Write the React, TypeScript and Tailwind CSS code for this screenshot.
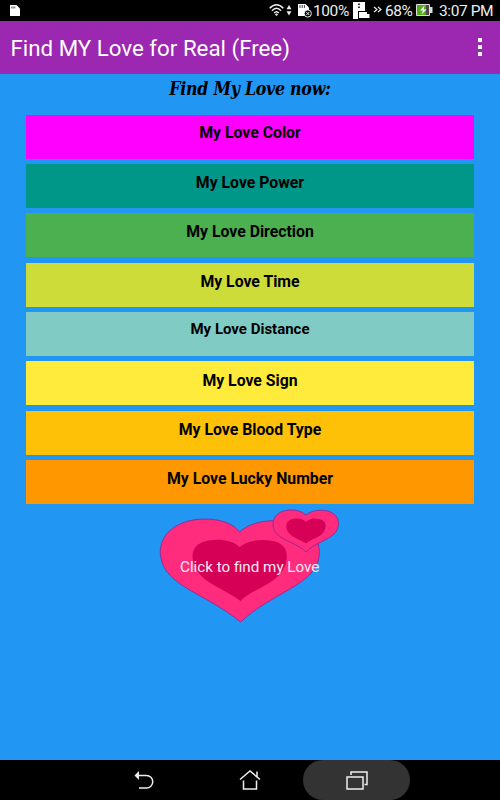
const buttons = [
  { label: "My Love Color", style: "bg-[#ff00ff] pb-[7px] text-[15.8px]" },
  { label: "My Love Power", style: "bg-[#009688] pb-[6px] text-[15.8px]" },
  { label: "My Love Direction", style: "bg-[#4caf50] pb-[6px] text-[15.8px]" },
  { label: "My Love Time", style: "bg-[#cddc39] pb-[6px] text-[15.8px]" },
  { label: "My Love Distance", style: "bg-[#80cbc4] pb-[9px] text-[15px]" },
  { label: "My Love Sign", style: "bg-[#ffeb3b] pb-[6px] text-[15.8px]" },
  { label: "My Love Blood Type", style: "bg-[#ffc107] pb-[6px] text-[15.8px]" },
  { label: "My Love Lucky Number", style: "bg-[#ff9800] pb-[6px] text-[15.8px]" },
];

const StatusBar = () => {
  return (
    <div className="flex h-[20.5px] items-center bg-black pl-[10px] leading-none text-[#eeeeee]">
      <svg width="10" height="11" viewBox="0 0 10 11">
        <path d="M0 0h6.5L10 3.5V11H0z" fill="#fff" />
        <path d="M1 2.5h4.5" stroke="#999" strokeWidth="2" />
      </svg>
      <svg className="ml-auto" width="23" height="14" viewBox="0 0 23 14">
        <g fill="none" stroke="#eee" strokeWidth="1.5">
          <path d="M0.7 5.2Q7.5 -1.8 14.3 5.2" />
          <path d="M3 7.7Q7.5 2.9 12 7.7" />
          <path d="M5.2 10.1Q7.5 7.5 9.8 10.1" />
        </g>
        <path d="M5.8 11.3Q7.5 9.9 9.2 11.3L7.5 13z" fill="#eee" />
        <path d="M17.5 6.2l2.5-4.2 2.5 4.2zM17.5 8.3h5L20 12.5z" fill="#eee" />
      </svg>
      <svg className="ml-[6px]" width="14" height="15" viewBox="0 0 14 15">
        <path d="M0 1h7.5L11 4.5V13H0z" fill="#fff" />
        <path d="M2 2v3M4.2 2v3M6.4 2v3" stroke="#444" />
        <circle cx="9.8" cy="10.5" r="3.6" fill="#000" stroke="#eee" />
        <path d="M8.3 9l3 3M11.3 9l-3 3" stroke="#eee" />
      </svg>
      <span className="ml-[1px] mt-[2px] w-[37px] text-[15.5px] tracking-[-0.4px]">
        100%
      </span>
      <svg className="ml-[3px]" width="17" height="18" viewBox="0 0 17 18">
        <path d="M0 1h12v9H5v8H0z" fill="#fff" />
        <path d="M6 2.5v1.5M6 5.5v1.5" stroke="#222" strokeWidth="1.8" />
        <path d="M6 11h8v2h2.5v4H6z" fill="#fff" />
      </svg>
      <svg className="ml-[3px]" width="9" height="8" viewBox="0 0 9 8">
        <path
          d="M1 1l3 2.5L1 6M5 1l3 2.5L5 6"
          fill="none"
          stroke="#eee"
          strokeWidth="1.2"
        />
      </svg>
      <span className="ml-[3px] mt-[2px] w-[28px] text-[15.5px] tracking-[-0.5px]">
        68%
      </span>
      <svg className="ml-[3px]" width="17" height="12" viewBox="0 0 17 12">
        <path d="M0.5 0.5h13v11h-13z" fill="#4a4a4a" stroke="#ddd" />
        <path d="M1 1h9v10H1z" fill="#4fae15" />
        <path d="M14 3h2.5v6H14z" fill="#ddd" />
        <path d="M8.5 1.5L4 6.5h3l-1.5 4 5-5h-3z" fill="#fff" />
      </svg>
      <span className="ml-[6px] mt-[2px] w-[61px] whitespace-nowrap text-[15.5px] tracking-[-0.4px]">
        3:07 PM
      </span>
    </div>
  );
};

const AppBar = () => {
  return (
    <div className="flex h-[53px] items-center justify-between bg-[#9c27b0] pl-[10.5px] pr-[18px] text-white">
      <h1 className="mt-[2px] text-[22.3px] leading-none">
        Find MY Love for Real (Free)
      </h1>
      <div className="space-y-[3px]">
        <div className="size-[4px] bg-white" />
        <div className="size-[4px] bg-white" />
        <div className="size-[4px] bg-white" />
      </div>
    </div>
  );
};

const LoveButton = () => {
  return (
    <button className="relative mx-auto mt-[3.4px] block h-[116px] w-[182px]">
      <svg width="182" height="116" viewBox="159 508 182 116">
        <g stroke="#8d2291" strokeWidth="0.8">
          <path
            d="M239.5 532C229 518 202 516.5 185 522C165 529 159 543 160.5 556C164 586 207 594 240.5 622C273 592 315 585 319 557C322 539 308 521.5 280 520.5C260 520 247 525 239.5 532Z"
            fill="#ff2c7d"
          />
          <path
            d="M306 515C299 509 289 509 282 511.5C271 516 271 528 277 534C284 541 298 544 306 552C315 542 332 540 337 530C341 521 337 514 328 511C319 509 311 511 306 515Z"
            fill="#ff2c7d"
          />
        </g>
        <g fill="#d60056">
          <path d="M239.5 547C232 539.5 215 538 203 542C192 546 191 556 194 564C200 583 224 588 240.5 601C255 587 280 584 286 563C289 551 284 543 273 541C258 538.5 247 541 239.5 547Z" />
          <path d="M306 522C302 518 295 517.5 290 520C284 523 286 531 290 534C295 539 301 540 306 543.5C311 539 319 538 323 533C328 526 326 520.5 319 519C313 517.5 309 519 306 522Z" />
        </g>
      </svg>
      <span className="absolute left-[21px] top-[50px] whitespace-nowrap text-[15.2px] leading-[18px] text-[#fbe9f4]">
        Click to find my Love
      </span>
    </button>
  );
};

const NavBar = () => {
  return (
    <div className="flex h-[40px] items-center bg-black pl-[90px]">
      <div className="flex w-[107px] justify-center">
        <svg width="20" height="20" viewBox="0 0 20 20" fill="none">
          <path
            d="M4 5.5h8.5a6.25 6.25 0 0 1 0 12.5H5"
            stroke="#eee"
            strokeWidth="1.5"
          />
          <path d="M0.5 5.5L5 1v9z" fill="#eee" />
        </svg>
      </div>
      <div className="flex w-[106px] justify-center">
        <svg width="22" height="22" viewBox="0 0 22 22" fill="none">
          <path
            d="M1 10.5L11 2l10 8.5M18 8V2.5M4.5 11.5V20h13v-8.5"
            stroke="#eee"
            strokeWidth="1.5"
          />
        </svg>
      </div>
      <div className="flex h-[40px] w-[107px] items-center justify-center rounded-full bg-[#333333]">
        <svg width="22" height="19" viewBox="0 0 22 19" fill="none">
          <path
            d="M1 6h16v12H1zM5 4V1h16v12.5h-2.5"
            stroke="#eee"
            strokeWidth="1.5"
          />
        </svg>
      </div>
    </div>
  );
};

const App = () => {
  return (
    <div className="flex h-[800px] w-[500px] flex-col overflow-hidden bg-[#2196f3] font-['Roboto',sans-serif]">
      <StatusBar />
      <AppBar />
      <main className="flex-1">
        <h2 className="h-[41px] pt-[3px] text-center font-['DejaVu_Serif_Condensed','DejaVu_Serif',serif] text-[17.6px] font-bold italic leading-[24px] tracking-[-0.25px]">
          Find My Love now:
        </h2>
        <div className="flex flex-col gap-[5.4px] px-[26px]">
          {buttons.map((button) => (
            <button
              key={button.label}
              className={`h-[44px] font-bold leading-none text-black ${button.style}`}
            >
              {button.label}
            </button>
          ))}
        </div>
        <LoveButton />
      </main>
      <NavBar />
    </div>
  );
};

export default App;
